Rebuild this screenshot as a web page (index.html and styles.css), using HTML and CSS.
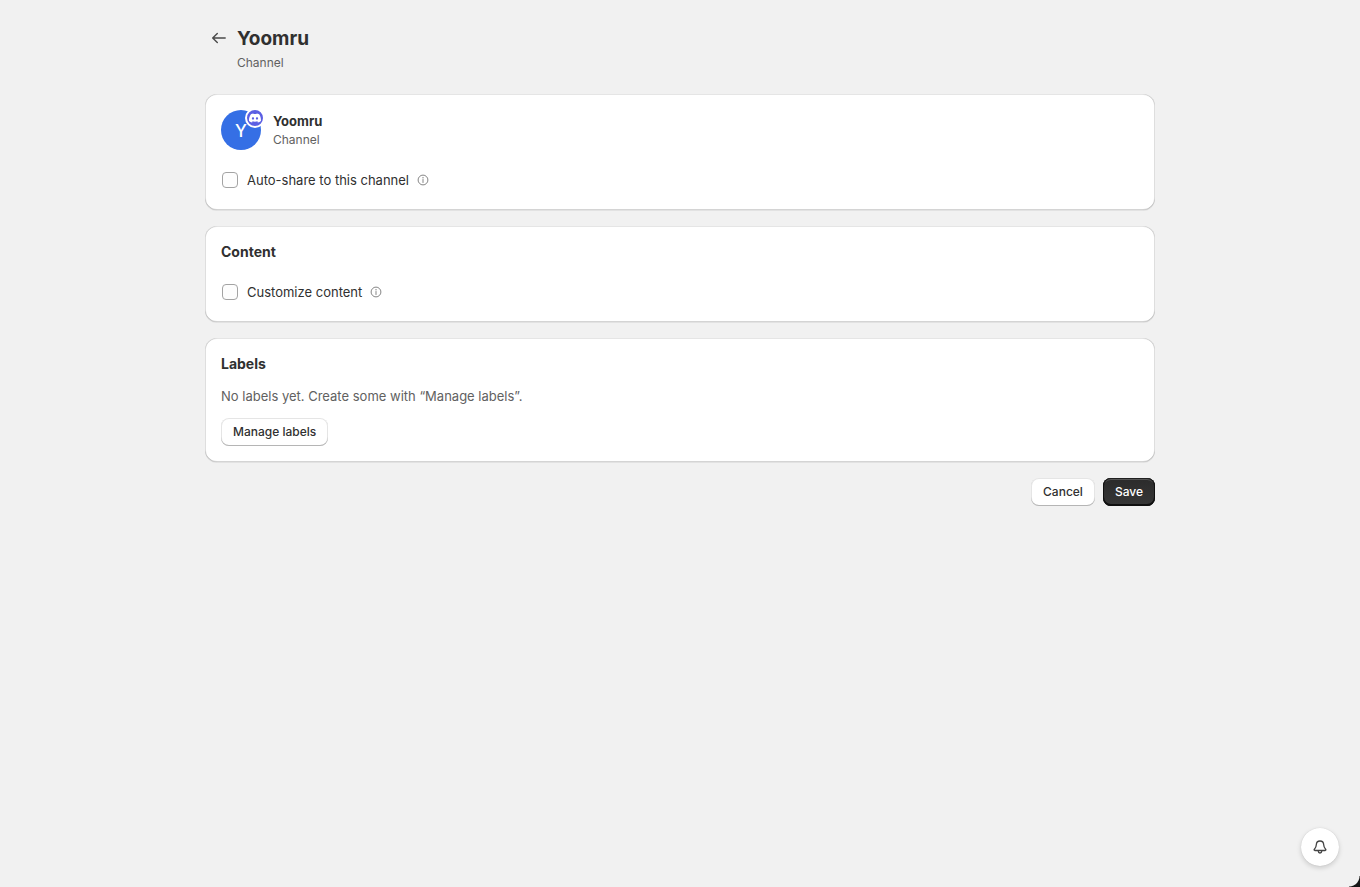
FILE: index.html
```html
<!DOCTYPE html>
<html lang="en">
<head>
<meta charset="utf-8">
<meta name="viewport" content="width=device-width, initial-scale=1">
<title>Yoomru – Channel</title>
<link rel="stylesheet" href="styles.css">
</head>
<body>
<main class="page">
  <header class="page-header">
    <a class="back" href="#" aria-label="Back">
      <svg viewBox="0 0 20 20" width="20" height="20" fill="none" stroke="currentColor" stroke-width="1.400" stroke-linecap="round" stroke-linejoin="round" aria-hidden="true"><path d="M16.200 10H3.800M8.300 5.500L3.700 10L8.300 14.500"/></svg>
    </a>
    <div class="page-heading">
      <h1 class="title">Yoomru</h1>
      <p class="subtitle">Channel</p>
    </div>
  </header>

  <form class="stack">
    <section class="card">
      <div class="identity">
        <div class="avatar">
          Y
          <span class="badge">
            <svg viewBox="0 0 24 24" width="12" height="12" role="img" aria-label="Discord"><path fill="currentColor" d="M20.3 4.4A19.8 19.8 0 0 0 15.4 2.9l-.6 1.2a18.300 18.300 0 0 0-5.500 0L8.700 2.900a19.700 19.700 0 0 0-4.900 1.500C.5 9-.3 13.600.1 18.100a19.900 19.900 0 0 0 6 3l1.300-2a12 12 0 0 1-1.900-.9l.4-.3a14.200 14.200 0 0 0 12.100 0l.4.3c-.6.400-1.200.7-1.900.9l1.300 2a19.800 19.800 0 0 0 6-3c.5-5.200-.8-9.700-3.500-13.700ZM8 15.300c-1.200 0-2.200-1.100-2.200-2.400S6.800 10.500 8 10.500s2.200 1.100 2.200 2.400S9.200 15.300 8 15.300Zm8 0c-1.200 0-2.200-1.100-2.200-2.400s1-2.400 2.200-2.400 2.200 1.100 2.200 2.400-1 2.400-2.200 2.400Z"/></svg>
          </span>
        </div>
        <div>
          <h2 class="name">Yoomru</h2>
          <p class="kind">Channel</p>
        </div>
      </div>
      <div class="choice">
        <label class="choice-label"><input class="checkbox" type="checkbox">Auto-share to this channel</label>
        <svg class="info" viewBox="0 0 12 12" role="img" aria-label="More information"><circle cx="6" cy="6" r="4.900" fill="none" stroke="currentColor"/><path d="M6 5.500v3" stroke="currentColor" stroke-linecap="round"/><circle cx="6" cy="3.700" r=".7" fill="currentColor"/></svg>
      </div>
    </section>

    <section class="card">
      <h2 class="heading">Content</h2>
      <div class="choice">
        <label class="choice-label"><input class="checkbox" type="checkbox">Customize content</label>
        <svg class="info" viewBox="0 0 12 12" role="img" aria-label="More information"><circle cx="6" cy="6" r="4.900" fill="none" stroke="currentColor"/><path d="M6 5.500v3" stroke="currentColor" stroke-linecap="round"/><circle cx="6" cy="3.700" r=".7" fill="currentColor"/></svg>
      </div>
    </section>

    <section class="card card-tight">
      <h2 class="heading">Labels</h2>
      <p class="hint">No labels yet. Create some with “Manage labels”.</p>
      <button class="button" type="button">Manage labels</button>
    </section>

    <div class="actions">
      <button class="button" type="button">Cancel</button>
      <button class="button button-primary" type="submit">Save</button>
    </div>
  </form>
</main>

<button class="notify" type="button" aria-label="Notifications">
  <svg viewBox="0 0 16 16" width="16" height="16" fill="none" stroke="currentColor" stroke-width="1.300" stroke-linecap="round" stroke-linejoin="round" aria-hidden="true"><path d="M8 2C5.700 2 4.400 3.700 4.300 5.700C4.200 8 3.600 8.900 2.400 10.200C1.800 10.900 2.100 11.500 2.900 11.500H13.100C13.900 11.500 14.200 10.900 13.600 10.200C12.400 8.900 11.800 8 11.700 5.700C11.600 3.700 10.300 2 8 2Z"/><path d="M6.300 11.700V12.300a1.700 1.700 0 0 0 3.400 0V11.700"/></svg>
</button>
<div class="corner" aria-hidden="true"></div>
</body>
</html>
```

FILE: styles.css
```css
* {
  box-sizing: border-box;
}

body {
  margin: 0;
  background: #f1f1f1;
  color: #303030;
  font: 13px/20px Inter, "Liberation Sans", sans-serif;
}

h1,
h2,
p {
  margin: 0;
}

.page {
  max-width: 982px;
  margin: 0 auto;
  padding: 26px 16px;
}

.page-header {
  display: flex;
  align-items: flex-start;
  gap: 8px;
  padding: 0 4px;
  margin-bottom: 20px;
}

.back {
  display: flex;
  padding: 2px 0;
  color: #4a4a4a;
}

.title {
  font-size: 19px;
  line-height: 26px;
  font-weight: 650;
}

.subtitle {
  font-size: 12px;
  line-height: 22px;
  color: #616161;
}

.stack {
  display: flex;
  flex-direction: column;
  gap: 16px;
}

.card {
  display: flex;
  flex-direction: column;
  align-items: flex-start;
  gap: 16px;
  padding: 16px;
  border-radius: 12px;
  background: #fff;
  box-shadow:
    0 1px 0 rgba(26, 26, 26, 0.07),
    inset 1px 0 0 rgba(0, 0, 0, 0.13),
    inset -1px 0 0 rgba(0, 0, 0, 0.13),
    inset 0 -1px 0 rgba(0, 0, 0, 0.17),
    inset 0 1px 0 rgba(204, 204, 204, 0.5);
}

.card-tight {
  gap: 12px;
}

.identity {
  display: flex;
  align-items: center;
  gap: 12px;
}

.avatar {
  position: relative;
  display: grid;
  place-items: center;
  width: 40px;
  height: 40px;
  padding-top: 1px;
  border-radius: 50%;
  background: #356fe5;
  color: #fff;
  font-size: 17px;
  font-weight: 500;
}

.badge {
  position: absolute;
  top: -2px;
  right: -4px;
  display: grid;
  place-items: center;
  width: 20px;
  height: 20px;
  border: 2px solid #fff;
  border-radius: 50%;
  background: #5b5fe3;
}

.name {
  font-size: 13px;
  line-height: 20px;
  font-weight: 650;
}

.kind {
  font-size: 12px;
  line-height: 18px;
  color: #616161;
}

.heading {
  font-size: 14px;
  line-height: 20px;
  font-weight: 650;
}

.choice {
  display: flex;
  align-items: center;
  gap: 8px;
  padding: 4px 0;
}

.choice-label {
  display: flex;
  align-items: center;
  gap: 9px;
}

.checkbox {
  appearance: none;
  width: 16px;
  height: 16px;
  margin: 0 0 0 1px;
  border: 1px solid #a3a3a3;
  border-radius: 4px;
  background: #fdfdfd;
}

.checkbox:checked {
  background: #303030;
}

.info {
  width: 12px;
  height: 12px;
  color: #858585;
}

.hint {
  color: #616161;
}

.button {
  height: 28px;
  padding: 0 12px;
  border: 0;
  border-radius: 8px;
  background: #fff;
  color: #303030;
  font: 550 12px/16px Inter, "Liberation Sans", sans-serif;
  box-shadow:
    inset 0 -1px 0 #b5b5b5,
    inset 0 0 0 1px rgba(0, 0, 0, 0.1);
}

.actions {
  display: flex;
  justify-content: flex-end;
  gap: 8px;
}

.button-primary {
  background: linear-gradient(#2b2b2b, #373737);
  color: #fff;
  box-shadow:
    inset 0 -1px 0 1px #101010,
    inset 0 0 0 1px #202020,
    inset 0 2px 0 #555;
}

.notify {
  position: fixed;
  right: 21px;
  bottom: 21px;
  display: grid;
  place-items: center;
  width: 38px;
  height: 38px;
  padding: 0;
  border: 0;
  border-radius: 50%;
  background: #fff;
  color: #444;
  box-shadow:
    0 0 1px rgba(0, 0, 0, 0.2),
    0 2px 5px rgba(0, 0, 0, 0.16);
}

.corner {
  position: fixed;
  right: 0;
  bottom: 0;
  width: 11px;
  height: 11px;
  background: radial-gradient(circle at 0 0, transparent 10px, #161616 11px);
}
```
